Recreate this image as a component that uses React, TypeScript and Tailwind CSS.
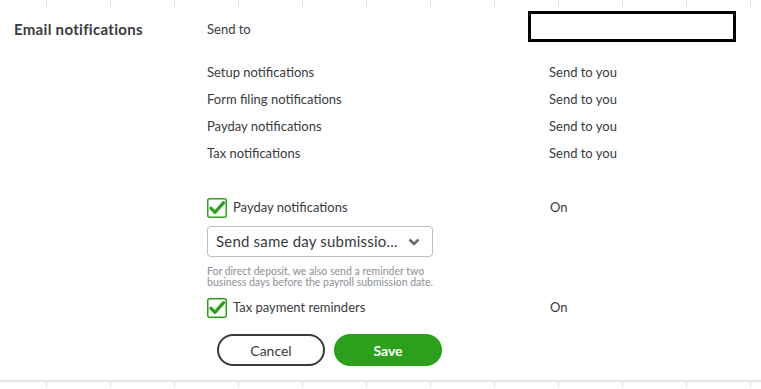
import React from 'react';

const Ticks = () => (
  <div className="flex pl-[46px] h-[6px]">
    {Array.from({ length: 12 }).map((_, i) => (
      <div key={i} className="w-[64px] shrink-0 border-l border-[#dcdcdc]" />
    ))}
  </div>
);

const Check = () => (
  <svg width="20" height="20" viewBox="0 0 20 20" className="shrink-0">
    <rect x="0.75" y="0.75" width="18.5" height="18.5" rx="2" fill="#fff" stroke="#2ca01c" strokeWidth="1.5" />
    <path d="M3.8 10.2 L8 14.4 L16.6 4.6" fill="none" stroke="#2ca01c" strokeWidth="3.2" strokeLinecap="round" strokeLinejoin="round" />
  </svg>
);

const rows = ['Setup notifications', 'Form filing notifications', 'Payday notifications', 'Tax notifications'];

export default function App() {
  return (
    <div className="w-[761px] h-[389px] bg-white overflow-hidden text-[#393a3d] font-['Lato',sans-serif]">
      <Ticks />

      {/* Send to */}
      <div className="flex items-start">
        <div className="w-[207px] pl-[14px] pt-[13px] text-[15px] leading-[20px] font-bold tracking-[0.3px]">Email notifications</div>
        <div className="w-[321px] pt-[13px] text-[13px] leading-[20px]">Send to</div>
        <div className="mt-[5px] w-[208px] h-[31px] border-[3px] border-black" />
      </div>

      {/* Recipients */}
      <div className="mt-[17px] pl-[207px] text-[13px]">
        {rows.map((r) => (
          <div key={r} className="flex items-center h-[27px]">
            <div className="w-[342px]">{r}</div>
            <div>Send to you</div>
          </div>
        ))}
      </div>

      {/* Payday */}
      <div className="mt-[31px] pl-[207px]">
        <div className="flex items-center h-[20px] text-[13px]">
          <div className="w-[343px] flex items-center gap-[6px]">
            <Check />
            <span>Payday notifications</span>
          </div>
          <span>On</span>
        </div>

        <div className="mt-[8px] w-[226px] h-[31px] border border-[#babec5] rounded-[4px] flex items-center justify-between pl-[8px] pr-[12px]">
          <span className="text-[15px] tracking-[0.2px]">Send same day submissio...</span>
          <svg width="12" height="8" viewBox="0 0 12 8">
            <path d="M1.5 1.5 L6 6 L10.5 1.5" fill="none" stroke="#6b6c72" strokeWidth="2.6" strokeLinejoin="round" />
          </svg>
        </div>

        <div className="mt-[9px] text-[10.5px] leading-[11px] text-[#8d9096] w-[250px]">
          For direct deposit, we also send a reminder two business days before the payroll submission date.
        </div>

        <div className="mt-[10px] flex items-center h-[20px] text-[13px]">
          <div className="w-[343px] flex items-center gap-[6px]">
            <Check />
            <span>Tax payment reminders</span>
          </div>
          <span>On</span>
        </div>

        <div className="mt-[16px] ml-[10px] flex gap-[9px]">
          <button className="w-[108px] h-[32px] rounded-full border-2 border-[#393a3d] bg-white text-[14px]">Cancel</button>
          <button className="w-[108px] h-[32px] rounded-full bg-[#2ca01c] text-white text-[14px] font-bold">Save</button>
        </div>
      </div>

      <div className="mt-[14px] h-[2px] bg-[#e3e3e3]" />
      <Ticks />
    </div>
  );
}
